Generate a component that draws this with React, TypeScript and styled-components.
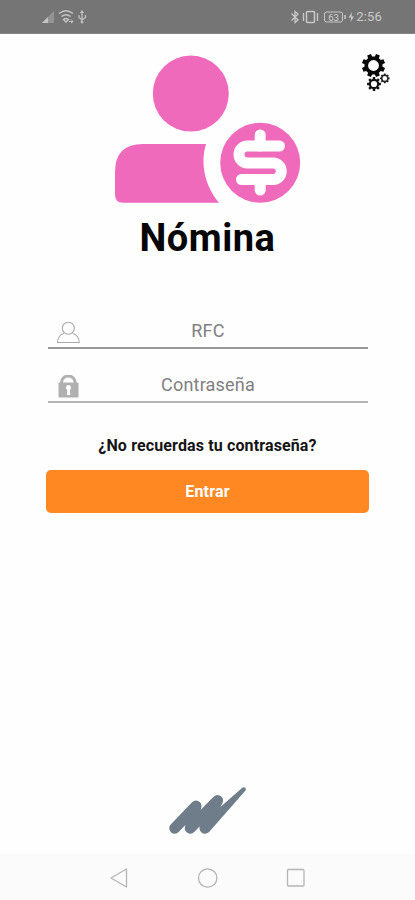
import React from "react";
import styled, { createGlobalStyle } from "styled-components";

const GlobalStyle = createGlobalStyle`
  * { box-sizing: border-box; }
  body { margin: 0; background: #fff; }
  svg { display: block; }
`;

const Screen = styled.div`
  width: 415px;
  height: 900px;
  display: flex;
  flex-direction: column;
  background: #fefefe;
  font-family: Roboto, "Liberation Sans", sans-serif;
  overflow: hidden;
`;

const StatusBar = styled.header`
  height: 34px;
  flex: none;
  display: flex;
  justify-content: space-between;
  padding: 0 33px 0 41px;
  background: #757575;
  border-bottom: 1px solid #858585;
  color: #c9c9c9;
`;

const StatusGroup = styled.div`
  display: flex;
  align-items: center;
`;

const Clock = styled.span`
  font-size: 13px;
  line-height: 16px;
  margin-left: 1px;
  letter-spacing: 0.2px;
`;

const Hero = styled.section`
  height: 170px;
  flex: none;
  display: grid;
  grid-template-columns: 1fr 187px 1fr;
  padding: 20px 24px 0 23px;
`;

const Settings = styled.button`
  grid-column: 3;
  justify-self: end;
  align-self: start;
  padding: 0;
  border: 0;
  background: none;
`;

const Portrait = styled.div`
  grid-column: 2;
  grid-row: 1;
`;

const Title = styled.h1`
  margin: 10px 0 0;
  height: 92px;
  text-align: center;
  font-size: 38px;
  line-height: 48px;
  font-weight: 700;
  letter-spacing: 0.5px;
  color: #050505;
`;

const Form = styled.form`
  display: flex;
  flex-direction: column;
  padding: 0 46px;
`;

const Field = styled.label<{ $line: string }>`
  height: 43px;
  margin: 0 1px 11px 2px;
  display: grid;
  grid-template-columns: 40px 1fr 40px;
  align-items: center;
  border-bottom: 2px solid ${(p) => p.$line};
  color: #808080;
  font-size: 18px;
  text-align: center;
`;

const FieldIcon = styled.span`
  padding: 12px 0 0 8px;
`;

const FieldText = styled.span`
  padding-top: 8px;
  line-height: 24px;
  letter-spacing: 0.2px;
`;

const Forgot = styled.a`
  margin-top: 20px;
  text-align: center;
  font-size: 16px;
  line-height: 24px;
  font-weight: 700;
  letter-spacing: 0.13px;
  color: #151515;
`;

const Submit = styled.button`
  margin-top: 12px;
  height: 43px;
  width: 323px;
  padding: 0;
  border: 0;
  border-radius: 5px;
  background: #ff8822;
  color: #fff;
  font: 700 16px/43px Roboto, sans-serif;
  letter-spacing: 0.2px;
`;

const Brand = styled.footer`
  margin-top: auto;
  height: 68px;
  flex: none;
  display: flex;
  justify-content: center;
`;

const NavBar = styled.nav`
  height: 46px;
  flex: none;
  display: flex;
  align-items: center;
  justify-content: space-between;
  padding: 2px 108px 0 109px;
  background: #fbfbfb;
`;

const gearPath = (cx: number, cy: number, outer: number, inner: number, teeth: number, shift = 0.5) => {
  const points: string[] = [];
  for (let i = 0; i < teeth; i++) {
    const mid = (i + shift) * ((Math.PI * 2) / teeth) - Math.PI / 2;
    const half = Math.PI / teeth;
    [[-0.62, inner], [-0.45, outer], [0.45, outer], [0.62, inner]].forEach(([k, r]) => {
      const a = mid + half * k;
      points.push(`${(cx + Math.cos(a) * r).toFixed(2)} ${(cy + Math.sin(a) * r).toFixed(2)}`);
    });
  }
  return `M${points.join("L")}Z`;
};

const Gears = () => (
  <svg width="30" height="38" viewBox="361 54 30 38">
    <path d={gearPath(373.5, 65.5, 11.8, 9.1, 8)} fill="#080808" />
    <circle cx="373.5" cy="65.5" r="5.4" fill="#fff" />
    <path d={gearPath(374, 84, 7, 5.2, 8, 0)} fill="#111" />
    <circle cx="374" cy="84" r="3.1" fill="#fff" />
    <path d={gearPath(384.8, 78.4, 4.9, 3.9, 8, 0)} fill="#222" />
    <circle cx="384.8" cy="78.4" r="2.3" fill="#fff" />
  </svg>
);

const PayrollIcon = () => (
  <svg width="187" height="150" viewBox="114 54 187 150">
    <g fill="#f06abc">
      <circle cx="190.8" cy="93.6" r="38" />
      <path d="M143 144H206C200 164 205 186 219 202.7H123Q115 202.7 115 194.5V172Q115 144 143 144Z" />
      <circle cx="260.2" cy="162.8" r="40" />
    </g>
    <g fill="none" stroke="#fff" strokeWidth="11" strokeLinecap="round">
      <path d="M260.2 135V146M260.2 180V190" />
      <path d="M279.5 146H247.5A8.5 8.5 0 0 0 247.5 163H273A8.25 8.25 0 0 1 273 179.5H241.5" />
    </g>
  </svg>
);

const SignalIcons = () => (
  <svg width="48" height="18" viewBox="41 8 48 18" fill="none" stroke="#c4c4c4">
    <path d="M42 23L54 11V23Z" fill="#949494" stroke="none" />
    <path d="M42 23L48 17V23Z" fill="#c4c4c4" stroke="none" />
    <path d="M59 13.5Q66 8 73 13.5M61.5 16.5Q66 13 70.5 16.5M63.5 19.5Q66 17.5 68.5 19.5L66 22Z" strokeWidth="1.4" />
    <path d="M69 21.5H73M71 19.5L73 21.5L71 23" />
    <path d="M82 11V23M79 15V17.5L82 20L85.5 17.5V15M80.5 13L82 11L83.5 13" strokeWidth="1.2" />
    <circle cx="82" cy="22" r="1" fill="#c4c4c4" />
  </svg>
);

const DeviceIcons = () => (
  <svg width="66" height="18" viewBox="289 8 66 18" fill="none" stroke="#c8c8c8">
    <path d="M291.5 13.5L298 20L295 22.5V11.5L298 14L291.5 20.5" strokeWidth="1.3" />
    <rect x="306.5" y="11.5" width="8" height="11" rx="1" strokeWidth="1.5" />
    <path d="M303.5 13V21M317.5 13V21" strokeWidth="1.3" />
    <rect x="324.5" y="12" width="18" height="10" rx="2" />
    <path d="M345 15V19" strokeWidth="1.5" />
    <text x="333.5" y="20.5" textAnchor="middle" fontFamily="Roboto, sans-serif" fontSize="9.5" fill="#d0d0d0" stroke="none">63</text>
    <path d="M352 12L348.5 17.5H351L350.5 22L354 16.5H351.5Z" fill="#c8c8c8" stroke="none" />
  </svg>
);

const UserIcon = () => (
  <svg width="24" height="24" viewBox="56 321 24 24" fill="none" stroke="#aaa" strokeWidth="1.1">
    <circle cx="68.3" cy="328.2" r="6" />
    <path d="M64 333.2Q57.5 335.5 57.5 342.5H79.2Q79.2 335.5 72.5 333.2" />
  </svg>
);

const LockIcon = () => (
  <svg width="24" height="24" viewBox="56 375 24 24">
    <path d="M61.5 384V382.3A6.8 6.3 0 0 1 75.1 382.3V384" fill="none" stroke="#b0b0b0" strokeWidth="3" />
    <rect x="58.5" y="382.5" width="20" height="15" rx="1" fill="#b0b0b0" />
    <circle cx="68.5" cy="387.5" r="2.5" fill="#fff" />
    <path d="M67.5 387H69.5L70.3 395H67Z" fill="#fff" />
  </svg>
);

const BrandMark = () => (
  <svg width="78" height="50" viewBox="169 786 78 50">
    <g fill="none" stroke="#6f7d8a" strokeWidth="11" strokeLinecap="round" strokeLinejoin="round">
      <path d="M174.7 828.2L196 806L190.3 828.2L217.5 800.5L205 828.2" />
    </g>
    <path d="M200.5 824.5L242 788C244.2 785.8 247 788.2 245.3 790.8L209.3 831.7Z" fill="#6f7d8a" />
  </svg>
);

export default function App() {
  return (
    <>
      <GlobalStyle />
      <Screen>
        <StatusBar>
          <StatusGroup><SignalIcons /></StatusGroup>
          <StatusGroup><DeviceIcons /><Clock>2:56</Clock></StatusGroup>
        </StatusBar>
        <Hero>
          <Portrait><PayrollIcon /></Portrait>
          <Settings type="button" aria-label="Ajustes"><Gears /></Settings>
        </Hero>
        <Title>Nómina</Title>
        <Form>
          <Field $line="#999"><FieldIcon><UserIcon /></FieldIcon><FieldText>RFC</FieldText></Field>
          <Field $line="#b5b5b5"><FieldIcon><LockIcon /></FieldIcon><FieldText>Contraseña</FieldText></Field>
          <Forgot>¿No recuerdas tu contraseña?</Forgot>
          <Submit type="button">Entrar</Submit>
        </Form>
        <Brand><BrandMark /></Brand>
        <NavBar>
          <svg width="20" height="22" viewBox="0 0 20 22" fill="none" stroke="#b5b5b5" strokeWidth="1.3"><path d="M2 11L17.5 2V20Z" strokeLinejoin="round" /></svg>
          <svg width="22" height="22" viewBox="0 0 22 22" fill="none" stroke="#b5b5b5" strokeWidth="1.3"><circle cx="11.7" cy="11" r="9.2" /></svg>
          <svg width="22" height="22" viewBox="0 0 22 22" fill="none" stroke="#b5b5b5" strokeWidth="1.3"><rect x="2.5" y="2.5" width="16.5" height="16.5" rx="1" /></svg>
        </NavBar>
      </Screen>
    </>
  );
}
